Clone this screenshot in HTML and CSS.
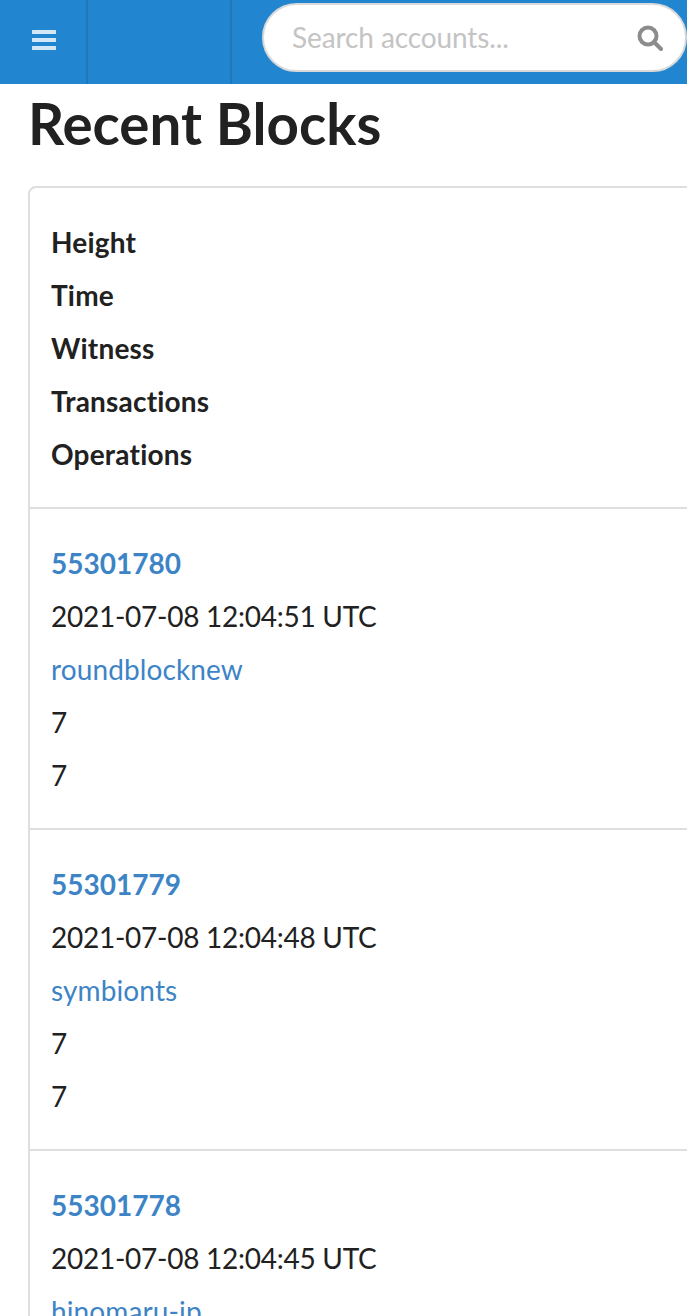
FILE: index.html
```html
<!DOCTYPE html>
<html lang="en">
<head>
    <meta charset="UTF-8">
    <meta name="viewport" content="width=device-width, initial-scale=1.0">
    <title>Recent Blocks</title>
    <link rel="stylesheet" href="styles.css">
</head>
<body>
    <header class="topbar">
        <a class="nav-cell menu-cell" href="#">
            <svg class="menu-icon" viewBox="0 0 24 20" width="24" height="20">
                <rect x="0" y="0" width="24" height="4" rx="0.5"/>
                <rect x="0" y="8" width="24" height="4" rx="0.5"/>
                <rect x="0" y="16" width="24" height="4" rx="0.5"/>
            </svg>
        </a>
        <div class="nav-cell empty-cell"></div>
        <form class="search">
            <input class="search-input" type="text" placeholder="Search accounts...">
            <svg class="search-icon" viewBox="0 0 26 26" width="26" height="26">
                <circle cx="11" cy="11" r="8.5"/>
                <line x1="17" y1="17" x2="24" y2="24"/>
            </svg>
        </form>
    </header>

    <main class="content">
        <h1>Recent Blocks</h1>

        <div class="blocks">
            <div class="row head">
                <div>Height</div>
                <div>Time</div>
                <div>Witness</div>
                <div>Transactions</div>
                <div>Operations</div>
            </div>
            <div class="row">
                <div><a class="height" href="#">55301780</a></div>
                <div class="time">2021-07-08 12:04:51 UTC</div>
                <div><a class="witness" href="#">roundblocknew</a></div>
                <div>7</div>
                <div>7</div>
            </div>
            <div class="row">
                <div><a class="height" href="#">55301779</a></div>
                <div class="time">2021-07-08 12:04:48 UTC</div>
                <div><a class="witness" href="#">symbionts</a></div>
                <div>7</div>
                <div>7</div>
            </div>
            <div class="row">
                <div><a class="height" href="#">55301778</a></div>
                <div class="time">2021-07-08 12:04:45 UTC</div>
                <div><a class="witness" href="#">hinomaru-jp</a></div>
                <div>7</div>
                <div>7</div>
            </div>
        </div>
    </main>
</body>
</html>
```

FILE: styles.css
```css
html {
    overflow: hidden;
}
body {
    font-family: Lato, sans-serif;
    font-size: 28px;
    line-height: 53px;
    color: #212121;
    background: #fff;
    margin: 0;
    height: 1316px;
    overflow: hidden;
}
a {
    color: #3d84c6;
    text-decoration: none;
}
.topbar {
    display: flex;
    height: 84px;
    background-color: #2185d0;
}
.nav-cell {
    display: flex;
    align-items: center;
    justify-content: center;
    height: 84px;
    box-sizing: border-box;
    border-right: 2px solid #1f78bc;
}
.menu-cell {
    width: 88px;
    padding: 0 0 4px 2px;
}
.menu-icon {
    fill: #d3e7f6;
}
.empty-cell {
    width: 144px;
}
.search {
    display: flex;
    align-items: center;
    width: 425px;
    height: 69px;
    margin: 3px 0 0 30px;
    padding: 0 22px 0 28px;
    box-sizing: border-box;
    background: #fff;
    border: 2px solid #d9d9d9;
    border-radius: 35px;
}
.search-input {
    flex: 1;
    min-width: 0;
    height: 62px;
    margin-bottom: 2px;
    padding: 0;
    border: none;
    outline: none;
    background: transparent;
    font-family: Lato, sans-serif;
    font-size: 28px;
    letter-spacing: -0.1px;
    color: #212121;
}
.search-input::placeholder {
    color: #c4c4c4;
    opacity: 1;
}
.search-icon {
    fill: none;
    stroke: #8c8c8c;
    stroke-width: 4;
    stroke-linecap: round;
}
.content {
    padding-left: 28px;
}
h1 {
    margin: 0 0 24px;
    font-size: 56.5px;
    line-height: 78px;
    font-weight: 700;
}
.blocks {
    width: 720px;
    border: 2px solid #dedede;
    border-radius: 8px;
}
.row {
    padding: 28px 21px 26px;
    border-top: 2px solid #dedede;
}
.row.head {
    border-top: none;
    font-weight: 700;
    letter-spacing: 0.2px;
}
.height {
    font-weight: 700;
}
.time {
    letter-spacing: -0.26px;
}
.witness {
    letter-spacing: 0.12px;
}
```
